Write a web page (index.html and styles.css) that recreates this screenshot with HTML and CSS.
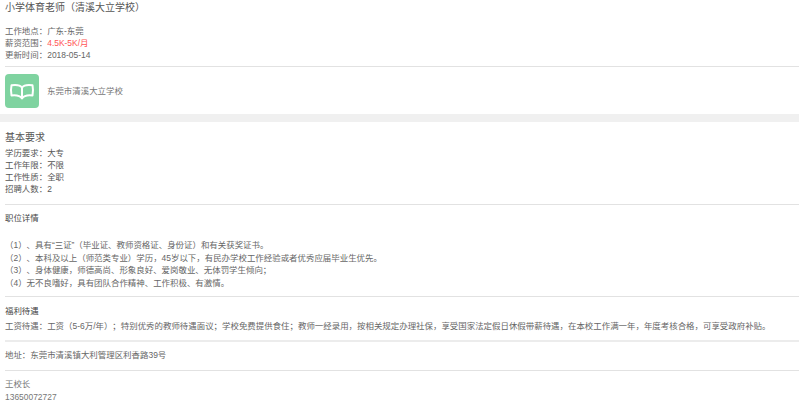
FILE: index.html
```html
<!DOCTYPE html>
<html lang="zh">
<head>
<meta charset="utf-8">
<title>小学体育老师</title>
<link rel="stylesheet" href="styles.css">
</head>
<body>
<section class="head">
  <h1 class="title">小学体育老师（清溪大立学校）</h1>
  <ul class="info">
    <li>工作地点：广东-东莞</li>
    <li>薪资范围：<span class="salary">4.5K-5K/月</span></li>
    <li>更新时间：2018-05-14</li>
  </ul>
</section>
<section class="school">
  <div class="logo">
    <svg viewBox="0 0 34 34" width="34" height="34">
      <path d="M17 13.500C15.500 11.300 12 10.500 6.500 11.200C5.800 14.500 5.800 18 6.500 21.500C11 21 15 21.500 17 24.500C19 21.500 23 21 27.500 21.500C28.200 18 28.200 14.500 27.500 11.200C22 10.500 18.500 11.300 17 13.500ZM17 13.500V24.500" fill="none" stroke="#fff" stroke-width="2" stroke-linejoin="round" stroke-linecap="round"/>
    </svg>
  </div>
  <span class="school-name">东莞市清溪大立学校</span>
</section>
<section class="basic">
  <h2 class="basic-title">基本要求</h2>
  <ul class="req">
    <li>学历要求：大专</li>
    <li>工作年限：不限</li>
    <li>工作性质：全职</li>
    <li>招聘人数：2</li>
  </ul>
</section>
<section class="detail">
  <h3 class="sub">职位详情</h3>
  <div class="duties">
    <p>（1）、具有“三证”（毕业证、教师资格证、身份证）和有关获奖证书。</p>
    <p>（2）、本科及以上（师范类专业）学历，45岁以下，有民办学校工作经验或者优秀应届毕业生优先。</p>
    <p>（3）、身体健康，师德高尚、形象良好、爱岗敬业、无体罚学生倾向；</p>
    <p>（4）无不良嗜好，具有团队合作精神、工作积极、有激情。</p>
  </div>
</section>
<section class="welfare">
  <h3 class="sub">福利待遇</h3>
  <p class="welfare-text">工资待遇：工资（5-6万/年）；特别优秀的教师待遇面议；学校免费提供食住；教师一经录用，按相关规定办理社保，享受国家法定假日休假带薪待遇，在本校工作满一年，年度考核合格，可享受政府补贴。</p>
</section>
<section class="address">地址：东莞市清溪镇大利管理区利香路39号</section>
<section class="contact">
  <p>王校长</p>
  <p>13650072727</p>
</section>
</body>
</html>
```
FILE: styles.css
```css
* { box-sizing: border-box; }
html, body { margin: 0; padding: 0; }
body {
  width: 799px;
  height: 406px;
  overflow: hidden;
  background: #fff;
  color: #666;
  font-family: "Liberation Sans", "Noto Sans CJK SC", sans-serif;
  font-size: 8.45px;
  line-height: 12px;
  text-spacing-trim: space-all;
}
h1, h2, h3, p, ul { margin: 0; padding: 0; font-weight: normal; }
ul { list-style: none; }

.head { margin-left: 5px; height: 67px; border-bottom: 1px solid #e2e2e2; padding-top: 2px; }
.title { font-size: 10px; line-height: 12px; color: #555; }
.info { margin-top: 11px; }
.salary { color: #f55; }

.school { display: flex; align-items: center; gap: 8px; margin-left: 5px; height: 47px; }
.logo { width: 34px; height: 34px; border-radius: 4px; background: #7fd3a0; display: flex; }
.school-name { color: #777; }

.basic { height: 90px; border-top: 8px solid #f0f0f0; padding: 9px 0 0 5px; }
.basic-title { font-size: 10px; line-height: 14px; color: #555; }
.req { margin-top: 2px; color: #555; }

.detail, .welfare, .address, .contact { margin-left: 5px; }
.detail { border-top: 1px solid #e2e2e2; padding-top: 7px; height: 93px; border-bottom: 1px solid #e2e2e2; }
.sub { font-size: 8.45px; line-height: 12px; color: #444; }
.duties { margin-top: 15px; color: #666; line-height: 12.6px; }
.welfare { height: 45px; padding-top: 8px; border-bottom: 2px solid #ececec; }
.welfare-text { margin-top: 3px; }
.address { height: 29px; padding-top: 7px; border-bottom: 1px solid #e2e2e2; }
.contact { padding-top: 7px; color: #777; line-height: 13px; }
```
